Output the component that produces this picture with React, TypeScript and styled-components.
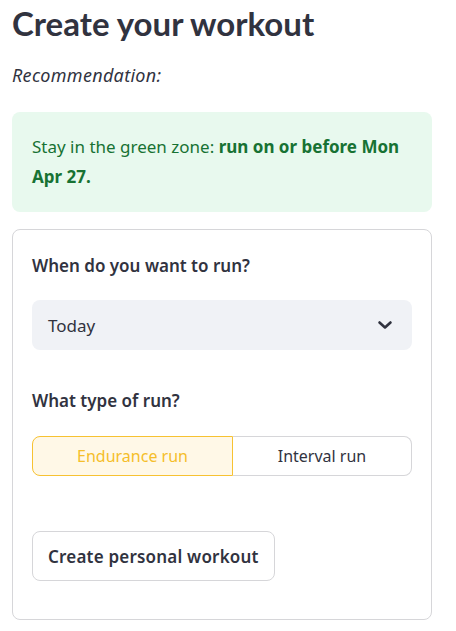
import React from "react";
import styled, { createGlobalStyle } from "styled-components";

const Global = createGlobalStyle`
  html, body { margin: 0; padding: 0; background: #ffffff; }
  body { font-family: "Noto Sans", "Lato", sans-serif; color: #31333f; }
  * { box-sizing: border-box; }
`;

const Page = styled.main`
  width: 456px;
  padding: 0 24px 0 12px;
  display: flex;
  flex-direction: column;
`;

const Title = styled.h1`
  margin: 0;
  font-family: "Lato", "Noto Sans", sans-serif;
  font-size: 33px;
  line-height: 46px;
  font-weight: 700;
  color: #31333f;
`;

const Caption = styled.p`
  margin: 15px 0 0 0;
  font-size: 18px;
  line-height: 28px;
  font-style: italic;
  letter-spacing: 0.3px;
  color: #31333f;
`;

const Alert = styled.div`
  margin-top: 23px;
  padding: 20px 20px;
  background: #e8f9ee;
  border-radius: 8px;
  color: #177233;
  font-size: 17px;
  line-height: 30px;
  strong { font-weight: 700; }
`;

const Card = styled.section`
  margin-top: 17px;
  border: 1px solid #d6d6d9;
  border-radius: 8px;
  padding: 24px 19px 38px 19px;
  display: flex;
  flex-direction: column;
`;

const Label = styled.div<{ $gap: number }>`
  margin-top: ${(p) => p.$gap}px;
  font-size: 17px;
  line-height: 24px;
  font-weight: 600;
  color: #31333f;
`;

const Select = styled.div`
  margin-top: 22px;
  height: 50px;
  background: #f0f2f6;
  border-radius: 8px;
  display: flex;
  align-items: center;
  justify-content: space-between;
  padding: 0 19px 0 16px;
  font-size: 17px;
  color: #31333f;
`;

const Segmented = styled.div`
  margin-top: 23px;
  height: 40px;
  display: grid;
  grid-template-columns: 201px 1fr;
`;

const Segment = styled.button<{ $active?: boolean; $first?: boolean }>`
  font-family: inherit;
  font-size: 16px;
  height: 40px;
  cursor: pointer;
  background: ${(p) => (p.$active ? "#fff8e7" : "#ffffff")};
  color: ${(p) => (p.$active ? "#f5be2a" : "#31333f")};
  border: 1px solid ${(p) => (p.$active ? "#f7c232" : "#d6d6d9")};
  ${(p) => (p.$first ? "" : "border-left: none;")}
  border-radius: ${(p) => (p.$first ? "8px 0 0 8px" : "0 8px 8px 0")};
  padding: 0;
`;

const Action = styled.button`
  margin-top: 55px;
  align-self: flex-start;
  height: 50px;
  padding: 0 15px;
  background: #ffffff;
  border: 1px solid #d6d6d9;
  border-radius: 8px;
  font-family: inherit;
  font-size: 17px;
  font-weight: 600;
  letter-spacing: 0.2px;
  color: #31333f;
  cursor: pointer;
`;

const Chevron = () => (
  <svg width="16" height="10" viewBox="0 0 16 10" fill="none">
    <path d="M2.5 2.5 L8 7.5 L13.5 2.5" stroke="#31333f" strokeWidth="2.6" strokeLinecap="round" strokeLinejoin="round" />
  </svg>
);

export default function App() {
  return (
    <>
      <Global />
      <Page>
        <Title>Create your workout</Title>
        <Caption>Recommendation:</Caption>
        <Alert>
          Stay in the green zone: <strong>run on or before Mon Apr 27.</strong>
        </Alert>
        <Card>
          <Label $gap={0}>When do you want to run?</Label>
          <Select>
            <span>Today</span>
            <Chevron />
          </Select>
          <Label $gap={39}>What type of run?</Label>
          <Segmented>
            <Segment $active $first>Endurance run</Segment>
            <Segment>Interval run</Segment>
          </Segmented>
          <Action>Create personal workout</Action>
        </Card>
      </Page>
    </>
  );
}
